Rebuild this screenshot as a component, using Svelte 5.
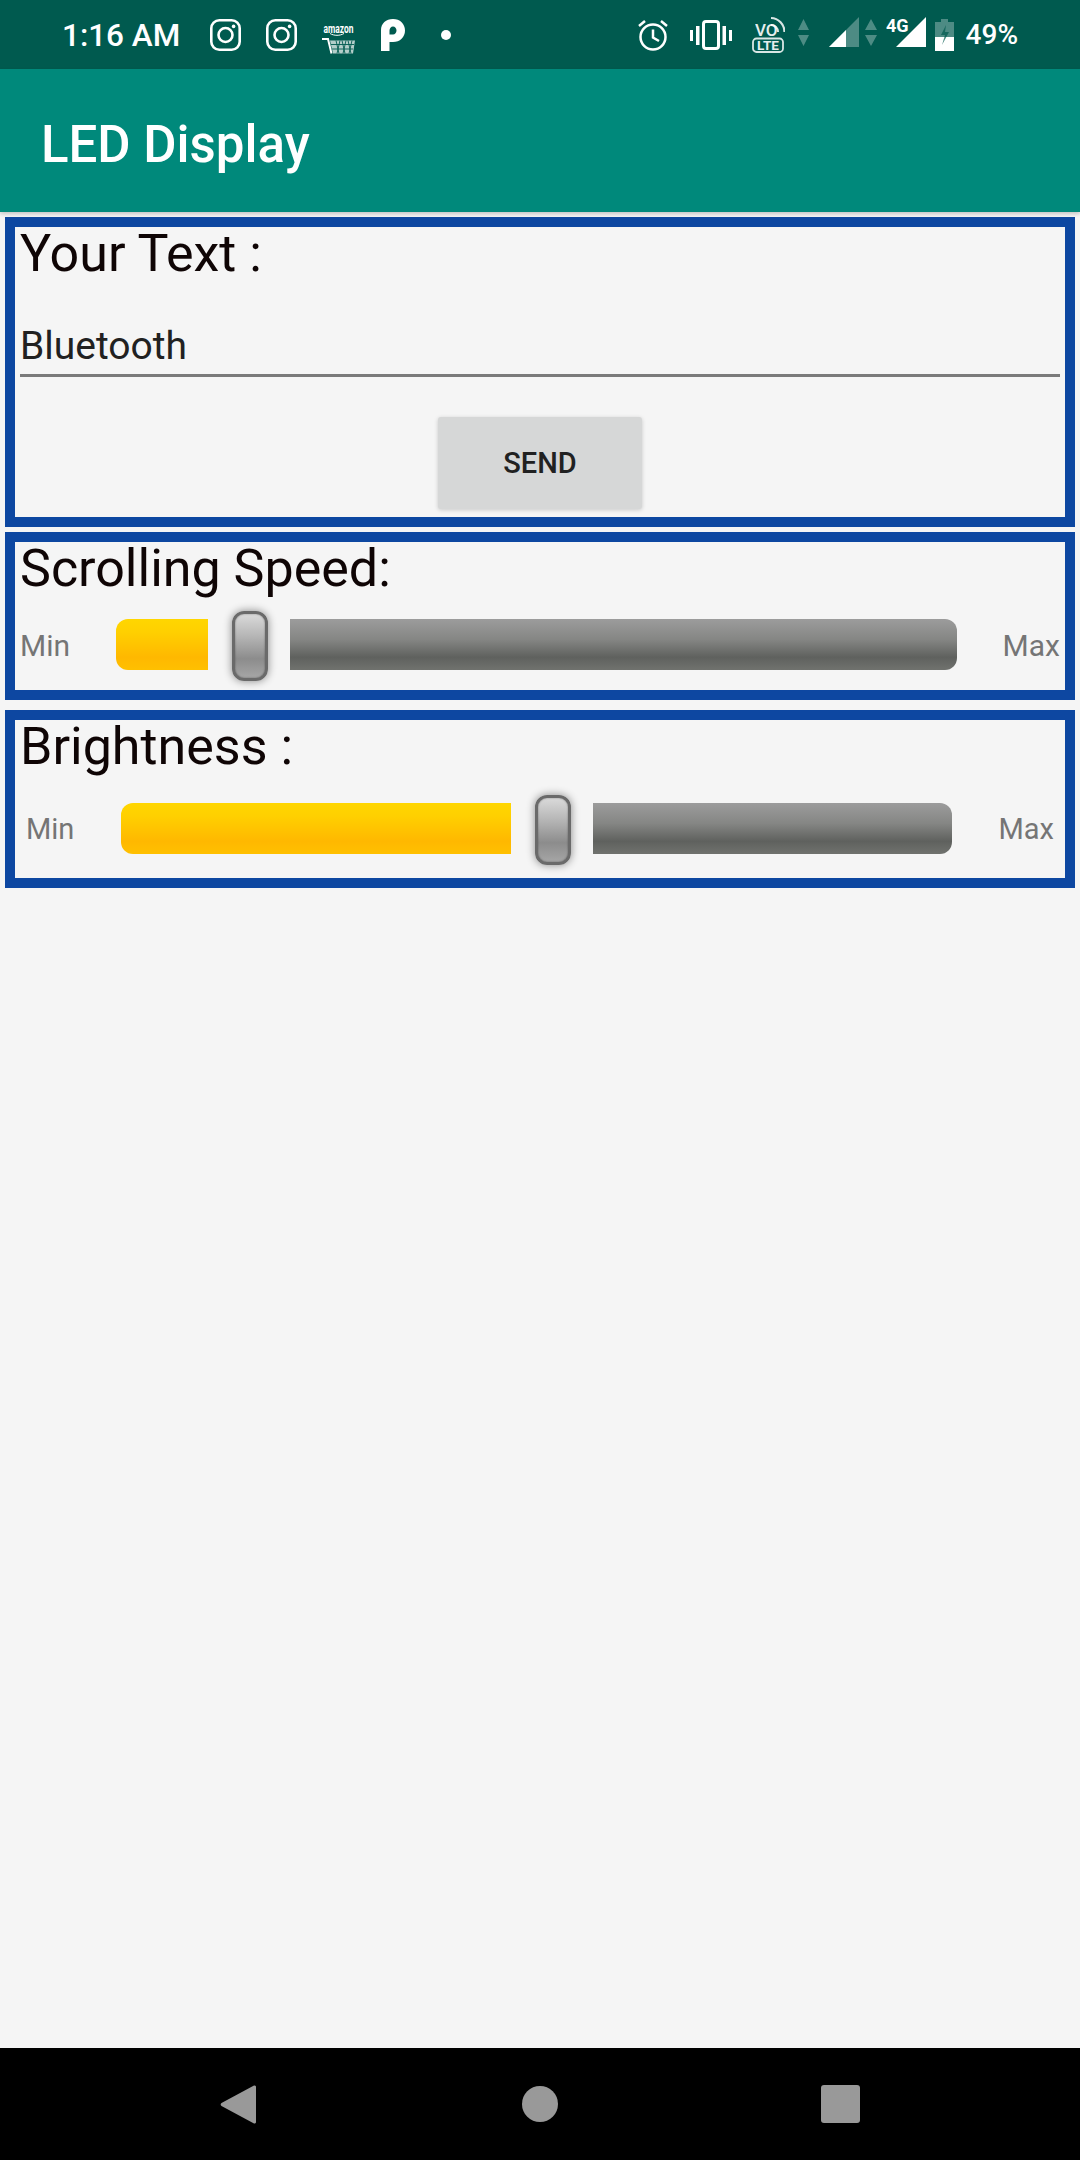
<script>
	const sliders = [
		{ title: 'Scrolling Speed:', fill: 92, inset: false },
		{ title: 'Brightness :', fill: 390, inset: true }
	]
</script>

<div class="screen">
	<div class="status">
		<div class="group left">
			<span class="time">1:16 AM</span>
			{#each [0, 1] as n (n)}
				<svg class="ig" width="31" height="32" viewBox="0 0 31 32" fill="none" stroke="#fff" stroke-width="2.6">
					<rect x="1.3" y="1.3" width="28.4" height="29.4" rx="8" />
					<circle cx="15.5" cy="16" r="7" />
					<circle cx="23.6" cy="7.4" r="1.8" fill="#fff" stroke="none" />
				</svg>
			{/each}
			<svg class="amz" width="33" height="34" viewBox="0 -4 33 34">
				<text transform="translate(16.5 9) scale(.7 1)" text-anchor="middle" class="amz-text">amazon</text>
				<path d="M8 9.500c4 2.400 10 2.400 14 0" fill="none" stroke="#fff" stroke-width="1" />
				<path d="M0 15h6l3.500 14.500" fill="none" stroke="#fff" stroke-width="2" />
				<path d="M8 16.500h25l-2 13H11z" fill="#fff" opacity=".7" />
				<path d="M9 20.500h23M10 25h21M14 16.500l3 13M20 16.500l3 13M26 16.500l3 13M18 16.500l-3 13M24 16.500l-3 13M30 16.500l-3 13" stroke="#005a4f" stroke-width=".9" fill="none" />
			</svg>
			<svg class="p" width="24" height="32" viewBox="0 0 24 32">
				<path d="M0 32V11C0 4.500 5 0 12 0s12 4.800 12 11.500S19 23 12 23H8.500v9zM8.500 15.500H12c2 0 3.500-1.700 3.500-4S14 7.500 12 7.500 8.500 9.200 8.500 11.500z" fill="#fff" fill-rule="evenodd" />
			</svg>
			<span class="dot"></span>
		</div>

		<div class="group right">
			<svg class="alarm" width="30" height="32" viewBox="0 0 30 32" fill="none" stroke="#fff" stroke-width="2.500">
				<circle cx="15" cy="18" r="12.500" />
				<path d="M15 10.500v8l6 3.500" />
				<path d="M1 7l6-5M29 7l-6-5" />
			</svg>
			<svg class="vib" width="42" height="30" viewBox="0 0 42 30" fill="#fff">
				<rect x="0" y="10" width="3" height="11" />
				<rect x="6" y="6" width="3.500" height="19" />
				<rect x="13.500" y="1.500" width="15" height="27" rx="2.500" fill="none" stroke="#fff" stroke-width="3" />
				<rect x="32.500" y="6" width="3.500" height="19" />
				<rect x="39" y="10" width="3" height="11" />
			</svg>
			<svg class="volte" width="33" height="39" viewBox="0 0 33 39">
				<text x="3" y="21.500" class="vo">VO</text>
				<path d="M19 11a7 7 0 0 1 7 7M19 4a14 14 0 0 1 13.500 14" fill="none" stroke="#fff" stroke-width="2.200" opacity=".85" />
				<rect x="1" y="24.500" width="30" height="13.500" rx="3.500" fill="none" stroke="#fff" stroke-width="1.800" opacity=".85" />
				<text x="16" y="36" text-anchor="middle" class="lte">LTE</text>
			</svg>
			<svg class="arrows" width="11" height="27" viewBox="0 0 11 27" fill="#fff" opacity=".3">
				<path d="M5.500 0L11 11H0zM0 16h11l-5.500 11z" />
			</svg>
			<svg class="sig1" width="30" height="30" viewBox="0 0 30 30">
				<path d="M30 0v30H0z" fill="#fff" opacity=".3" />
				<path d="M17 13v17H0z" fill="#fff" />
			</svg>
			<svg class="arrows arrows2" width="12" height="27" viewBox="0 0 12 27" fill="#fff" opacity=".3">
				<path d="M6 0l6 11H0zM0 16h12L6 27z" />
			</svg>
			<svg class="sig2" width="40" height="34" viewBox="0 -4 40 34">
				<text x="0" y="15" class="fourg">4G</text>
				<path d="M40 0v30H10z" fill="#fff" />
			</svg>
			<svg class="batt" width="19" height="32" viewBox="0 0 19 32">
				<path d="M6 0h7v3h6v29H0V3h6z" fill="#fff" opacity=".3" />
				<path d="M0 18h19v14H0z" fill="#fff" />
				<path d="M11 6L6 16h4l-3 10 7-13h-4z" fill="#005a4f" opacity=".7" />
			</svg>
			<span class="pct">49%</span>
		</div>
	</div>

	<header class="appbar">LED Display</header>

	<main class="content">
		<section class="box first">
			<div class="heading">Your Text :</div>
			<div class="field">Bluetooth</div>
			<div class="actions">
				<button class="send">SEND</button>
			</div>
		</section>

		{#each sliders as s (s.title)}
			<section class="box" class:bright={s.inset}>
				<div class="heading">{s.title}</div>
				<div class="slider" class:inset={s.inset}>
					<span class="min">Min</span>
					<div class="track">
						<div class="fill" style="width: {s.fill}px"></div>
						<div class="thumb"></div>
						<div class="rest"></div>
					</div>
					<span class="max">Max</span>
				</div>
			</section>
		{/each}
	</main>

	<nav class="navbar">
		<svg width="36" height="41" viewBox="0 0 36 41"><path d="M34 1.500L1.500 19a2 2 0 0 0 0 3L34 39.500a1.500 1.500 0 0 0 2-1.500V3a1.500 1.500 0 0 0-2-1.500z" fill="#999" /></svg>
		<span class="home"></span>
		<span class="square"></span>
	</nav>
</div>

<style>
	:global(body) {
		background: #f5f5f5;
	}
	.screen {
		display: flex;
		flex-direction: column;
		height: 2160px;
		font-family: Roboto, sans-serif;
		background: #f5f5f5;
	}

	.status {
		display: flex;
		justify-content: space-between;
		align-items: center;
		flex: none;
		height: 69px;
		padding: 0 62px;
		box-sizing: border-box;
		background: #005a4f;
		color: #fff;
	}
	.group {
		display: flex;
		align-items: center;
	}
	.time {
		width: 116px;
		margin: 2px 32px 0 0;
		font-size: 31.500px;
		font-weight: 500;
		white-space: nowrap;
	}
	.ig { margin-right: 25px; }
	.amz { margin-right: 26px; margin-top: 4px; }
	.amz-text { font-size: 12px; font-weight: 700; fill: #fff; }
	.p { margin-right: 36px; }
	.dot {
		width: 10px;
		height: 10px;
		border-radius: 50%;
		background: #fff;
	}
	.alarm { margin-right: 22px; }
	.vib { margin-right: 20px; }
	.volte { margin: 0 13px 2px 0; }
	.arrows { margin: 0 20px 5px 0; }
	.sig1 { margin: 0 6px 5px 0; }
	.arrows2 { margin-right: 9px; }
	.sig2 { margin: 0 9px 9px 0; }
	.batt { margin-right: 12px; }
	.vo { font-size: 17px; font-weight: 500; fill: #fff; opacity: .9; }
	.lte { font-size: 13.500px; font-weight: 700; fill: #fff; opacity: .9; }
	.fourg { font-size: 18px; font-weight: 700; fill: #fff; }
	.pct {
		font-size: 28px;
		font-weight: 500;
	}

	.appbar {
		flex: none;
		height: 143px;
		padding: 8px 0 0 41px;
		box-sizing: border-box;
		background: #00897b;
		color: #fff;
		font-size: 51px;
		font-weight: 500;
		line-height: 135px;
		box-shadow: 0 2px 4px rgba(0, 0, 0, .2);
	}

	.content {
		display: flex;
		flex-direction: column;
		flex: 1;
		gap: 5px;
		padding: 5px 5px 0;
	}
	.box {
		border: 10px solid #0d47a1;
		height: 168px;
		box-sizing: border-box;
	}
	.box.first { height: 310px; }
	.box.bright {
		height: 178px;
		margin-top: 5px;
	}
	.heading {
		height: 67px;
		padding-left: 5px;
		color: #0f0505;
		font-size: 52px;
		line-height: 54px;
		white-space: nowrap;
	}
	.first .heading { height: 68px; }
	.bright .heading { height: 73px; }

	.field {
		margin: 0 5px;
		height: 82px;
		padding-top: 31px;
		box-sizing: border-box;
		border-bottom: 3px solid #7a7a7a;
		color: #212121;
		font-size: 39px;
		line-height: 40px;
	}
	.actions {
		display: flex;
		justify-content: center;
		margin-top: 40px;
	}
	.send {
		width: 204px;
		height: 92px;
		border: none;
		border-radius: 3px;
		background: #d6d7d7;
		color: #212121;
		font-family: inherit;
		font-size: 29px;
		font-weight: 500;
		box-shadow: 0 1px 4px rgba(0, 0, 0, .18);
	}

	.slider {
		display: flex;
		align-items: center;
		height: 70px;
		padding: 0 5px;
	}
	.slider.inset { padding: 0 11px; }
	.min, .max {
		flex: none;
		margin-top: 2px;
		color: #757575;
		font-size: 30px;
	}
	.inset .min, .inset .max { font-size: 29px; }
	.min { width: 96px; }
	.inset .min { width: 95px; }
	.max {
		width: 103px;
		text-align: right;
	}
	.inset .max { width: 102px; }
	.track {
		display: flex;
		flex: 1;
		align-items: center;
	}
	.fill, .rest {
		height: 51px;
	}
	.fill {
		flex: none;
		border-radius: 12px 0 0 12px;
		background: linear-gradient(#ffd600 0%, #ffd000 25%, #ffb800 75%, #ffc000 100%);
	}
	.rest {
		flex: 1;
		border-radius: 0 12px 12px 0;
		background: linear-gradient(#9c9c9c 0%, #858684 40%, #5f615e 75%, #70726e 100%);
	}
	.thumb {
		flex: none;
		width: 36px;
		height: 70px;
		margin: 4px 22px 0 24px;
		box-sizing: border-box;
		border: 3px solid #6a6a6a;
		border-radius: 12px;
		background: linear-gradient(#dadada 0%, #b5b5b5 35%, #8c8c8c 70%, #a6a6a6 100%);
		box-shadow: 0 0 9px rgba(0, 0, 0, .45), inset 0 0 2px rgba(0, 0, 0, .4);
	}

	.navbar {
		display: flex;
		align-items: center;
		flex: none;
		height: 112px;
		padding: 0 220px;
		box-sizing: border-box;
		justify-content: space-between;
		background: #000;
	}
	.home {
		width: 36px;
		height: 36px;
		margin-left: 3px;
		border-radius: 50%;
		background: #999;
	}
	.square {
		width: 39px;
		height: 38px;
		border-radius: 3px;
		background: #999;
	}
</style>
